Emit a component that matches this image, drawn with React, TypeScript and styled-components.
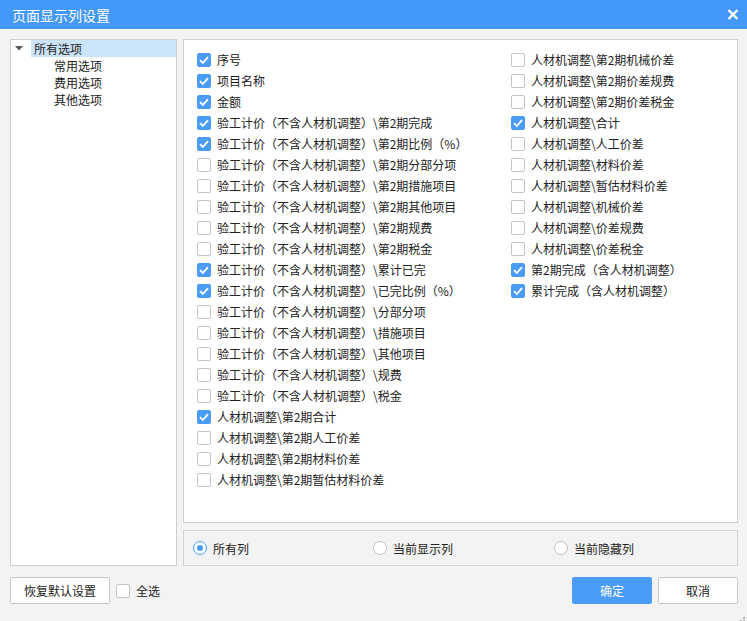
import React, { useState } from "react";
import styled, { createGlobalStyle } from "styled-components";

const Global = createGlobalStyle`
  html, body { margin: 0; padding: 0; }
  body { font-family: "Noto Sans CJK SC", "Noto Sans", sans-serif; font-size: 12px; color: #222; }
  * { box-sizing: border-box; }
`;

const Dialog = styled.div`
  width: 747px;
  height: 621px;
  background: #f3f3f3;
  display: flex;
  flex-direction: column;
  position: relative;
  overflow: hidden;
`;

const TitleBar = styled.div`
  height: 29px;
  background: #4398f8;
  color: #fff;
  display: flex;
  align-items: center;
  justify-content: space-between;
  padding: 0 7px 0 12px;
  font-size: 14px;
`;

const CloseBtn = styled.div`
  width: 14px;
  height: 14px;
  display: flex;
  align-items: center;
  justify-content: center;
`;

const Body = styled.div`
  flex: 1;
  display: flex;
  flex-direction: column;
  padding: 10px 9px 0 10px;
`;

const Main = styled.div`
  display: flex;
  gap: 6px;
  height: 527px;
`;

const TreePanel = styled.div`
  width: 167px;
  background: #fff;
  border: 1px solid #cfcfcf;
  padding-top: 0;
`;

const TreeRow = styled.div<{ $level: number }>`
  height: 17px;
  display: flex;
  align-items: center;
  padding-left: ${(p) => (p.$level === 0 ? 3 : 40)}px;
  line-height: 17px;
`;

const Caret = styled.span`
  width: 10px;
  margin-right: 7px;
  display: inline-flex;
  justify-content: center;
`;

const TreeLabel = styled.span<{ $selected?: boolean }>`
  flex: ${(p) => (p.$selected ? 1 : "none")};
  background: ${(p) => (p.$selected ? "#cce4fa" : "transparent")};
  padding-left: 3px;
  height: 17px;
  line-height: 17px;
`;

const RightCol = styled.div`
  flex: 1;
  display: flex;
  flex-direction: column;
  gap: 7px;
`;

const ListPanel = styled.div`
  height: 484px;
  background: #fff;
  border: 1px solid #cfcfcf;
  padding: 9px 0 0 13px;
  display: grid;
  grid-template-columns: 314px 1fr;
  align-content: start;
`;

const Column = styled.div`
  display: flex;
  flex-direction: column;
`;

const Row = styled.label`
  height: 21px;
  display: flex;
  align-items: center;
  gap: 6px;
  white-space: nowrap;
`;

const Box = styled.span<{ $checked: boolean }>`
  width: 14px;
  height: 14px;
  border-radius: 2px;
  flex: none;
  display: inline-flex;
  align-items: center;
  justify-content: center;
  background: ${(p) => (p.$checked ? "#4a9cf6" : "#fff")};
  border: 1px solid ${(p) => (p.$checked ? "#4a9cf6" : "#c4c4c4")};
`;

const RadioPanel = styled.div`
  height: 36px;
  border: 1px solid #d3d3d3;
  display: grid;
  grid-template-columns: 180px 181px 1fr;
  align-items: center;
  padding-left: 9px;
`;

const RadioItem = styled.label`
  display: flex;
  align-items: center;
  gap: 6px;
`;

const RadioCircle = styled.span<{ $on: boolean }>`
  width: 14px;
  height: 14px;
  border-radius: 50%;
  border: 1px solid ${(p) => (p.$on ? "#4a9cf6" : "#c4c4c4")};
  background: #fff;
  display: inline-flex;
  align-items: center;
  justify-content: center;
  &::after {
    content: "";
    width: 6px;
    height: 6px;
    border-radius: 50%;
    background: ${(p) => (p.$on ? "#4a9cf6" : "transparent")};
  }
`;

const Footer = styled.div`
  margin-top: 11px;
  height: 27px;
  display: flex;
  align-items: center;
`;

const Button = styled.button<{ $primary?: boolean; $w: number }>`
  width: ${(p) => p.$w}px;
  height: 27px;
  font-family: inherit;
  font-size: 12px;
  border-radius: 2px;
  border: 1px solid ${(p) => (p.$primary ? "#4a9cf6" : "#c8c8c8")};
  background: ${(p) => (p.$primary ? "#4a9cf6" : "#fff")};
  color: ${(p) => (p.$primary ? "#fff" : "#222")};
  padding: 0;
  cursor: pointer;
`;

const SelectAll = styled.label`
  display: flex;
  align-items: center;
  gap: 6px;
  margin-left: 6px;
`;

const Spacer = styled.div`
  flex: 1;
`;

const ButtonGroup = styled.div`
  display: flex;
  gap: 6px;
`;

const Grip = styled.div`
  position: absolute;
  right: 2px;
  bottom: 2px;
  width: 8px;
  height: 8px;
`;

const Check = () => (
  <svg width="10" height="8" viewBox="0 0 10 8">
    <path d="M1 4.2 L3.8 7 L9 1.2" stroke="#fff" strokeWidth="1.8" fill="none" />
  </svg>
);

const P = "验工计价（不含人材机调整）\\";
const R = "人材机调整\\";

const col1: [string, boolean][] = [
  ["序号", true],
  ["项目名称", true],
  ["金额", true],
  [P + "第2期完成", true],
  [P + "第2期比例（%）", true],
  [P + "第2期分部分项", false],
  [P + "第2期措施项目", false],
  [P + "第2期其他项目", false],
  [P + "第2期规费", false],
  [P + "第2期税金", false],
  [P + "累计已完", true],
  [P + "已完比例（%）", true],
  [P + "分部分项", false],
  [P + "措施项目", false],
  [P + "其他项目", false],
  [P + "规费", false],
  [P + "税金", false],
  [R + "第2期合计", true],
  [R + "第2期人工价差", false],
  [R + "第2期材料价差", false],
  [R + "第2期暂估材料价差", false],
];

const col2: [string, boolean][] = [
  [R + "第2期机械价差", false],
  [R + "第2期价差规费", false],
  [R + "第2期价差税金", false],
  [R + "合计", true],
  [R + "人工价差", false],
  [R + "材料价差", false],
  [R + "暂估材料价差", false],
  [R + "机械价差", false],
  [R + "价差规费", false],
  [R + "价差税金", false],
  ["第2期完成（含人材机调整）", true],
  ["累计完成（含人材机调整）", true],
];

function CheckItem({ label, checked }: { label: string; checked: boolean }) {
  return (
    <Row>
      <Box $checked={checked}>{checked && <Check />}</Box>
      <span>{label}</span>
    </Row>
  );
}

export default function App() {
  const [radio] = useState(0);
  const radios = ["所有列", "当前显示列", "当前隐藏列"];
  return (
    <>
      <Global />
      <Dialog>
        <TitleBar>
          <span>页面显示列设置</span>
          <CloseBtn>
            <svg width="12" height="11" viewBox="0 0 12 11">
              <path d="M1.5 1 L10.5 10 M10.5 1 L1.5 10" stroke="#fff" strokeWidth="2.4" />
            </svg>
          </CloseBtn>
        </TitleBar>
        <Body>
          <Main>
            <TreePanel>
              <TreeRow $level={0}>
                <Caret>
                  <svg width="8" height="5" viewBox="0 0 8 5">
                    <path d="M0 0 L8 0 L4 4.5 Z" fill="#555" />
                  </svg>
                </Caret>
                <TreeLabel $selected>所有选项</TreeLabel>
              </TreeRow>
              <TreeRow $level={1}><TreeLabel>常用选项</TreeLabel></TreeRow>
              <TreeRow $level={1}><TreeLabel>费用选项</TreeLabel></TreeRow>
              <TreeRow $level={1}><TreeLabel>其他选项</TreeLabel></TreeRow>
            </TreePanel>
            <RightCol>
              <ListPanel>
                <Column>
                  {col1.map(([l, c], i) => (
                    <CheckItem key={i} label={l} checked={c} />
                  ))}
                </Column>
                <Column>
                  {col2.map(([l, c], i) => (
                    <CheckItem key={i} label={l} checked={c} />
                  ))}
                </Column>
              </ListPanel>
              <RadioPanel>
                {radios.map((r, i) => (
                  <RadioItem key={r}>
                    <RadioCircle $on={radio === i} />
                    <span>{r}</span>
                  </RadioItem>
                ))}
              </RadioPanel>
            </RightCol>
          </Main>
          <Footer>
            <Button $w={100}>恢复默认设置</Button>
            <SelectAll>
              <Box $checked={false} />
              <span>全选</span>
            </SelectAll>
            <Spacer />
            <ButtonGroup>
              <Button $primary $w={80}>确定</Button>
              <Button $w={80}>取消</Button>
            </ButtonGroup>
          </Footer>
        </Body>
        <Grip>
          <svg width="8" height="8" viewBox="0 0 8 8">
            <rect x="6" y="0" width="2" height="2" fill="#aaa" />
            <rect x="3" y="3" width="2" height="2" fill="#aaa" />
            <rect x="6" y="3" width="2" height="2" fill="#aaa" />
            <rect x="0" y="6" width="2" height="2" fill="#aaa" />
            <rect x="3" y="6" width="2" height="2" fill="#aaa" />
            <rect x="6" y="6" width="2" height="2" fill="#aaa" />
          </svg>
        </Grip>
      </Dialog>
    </>
  );
}
